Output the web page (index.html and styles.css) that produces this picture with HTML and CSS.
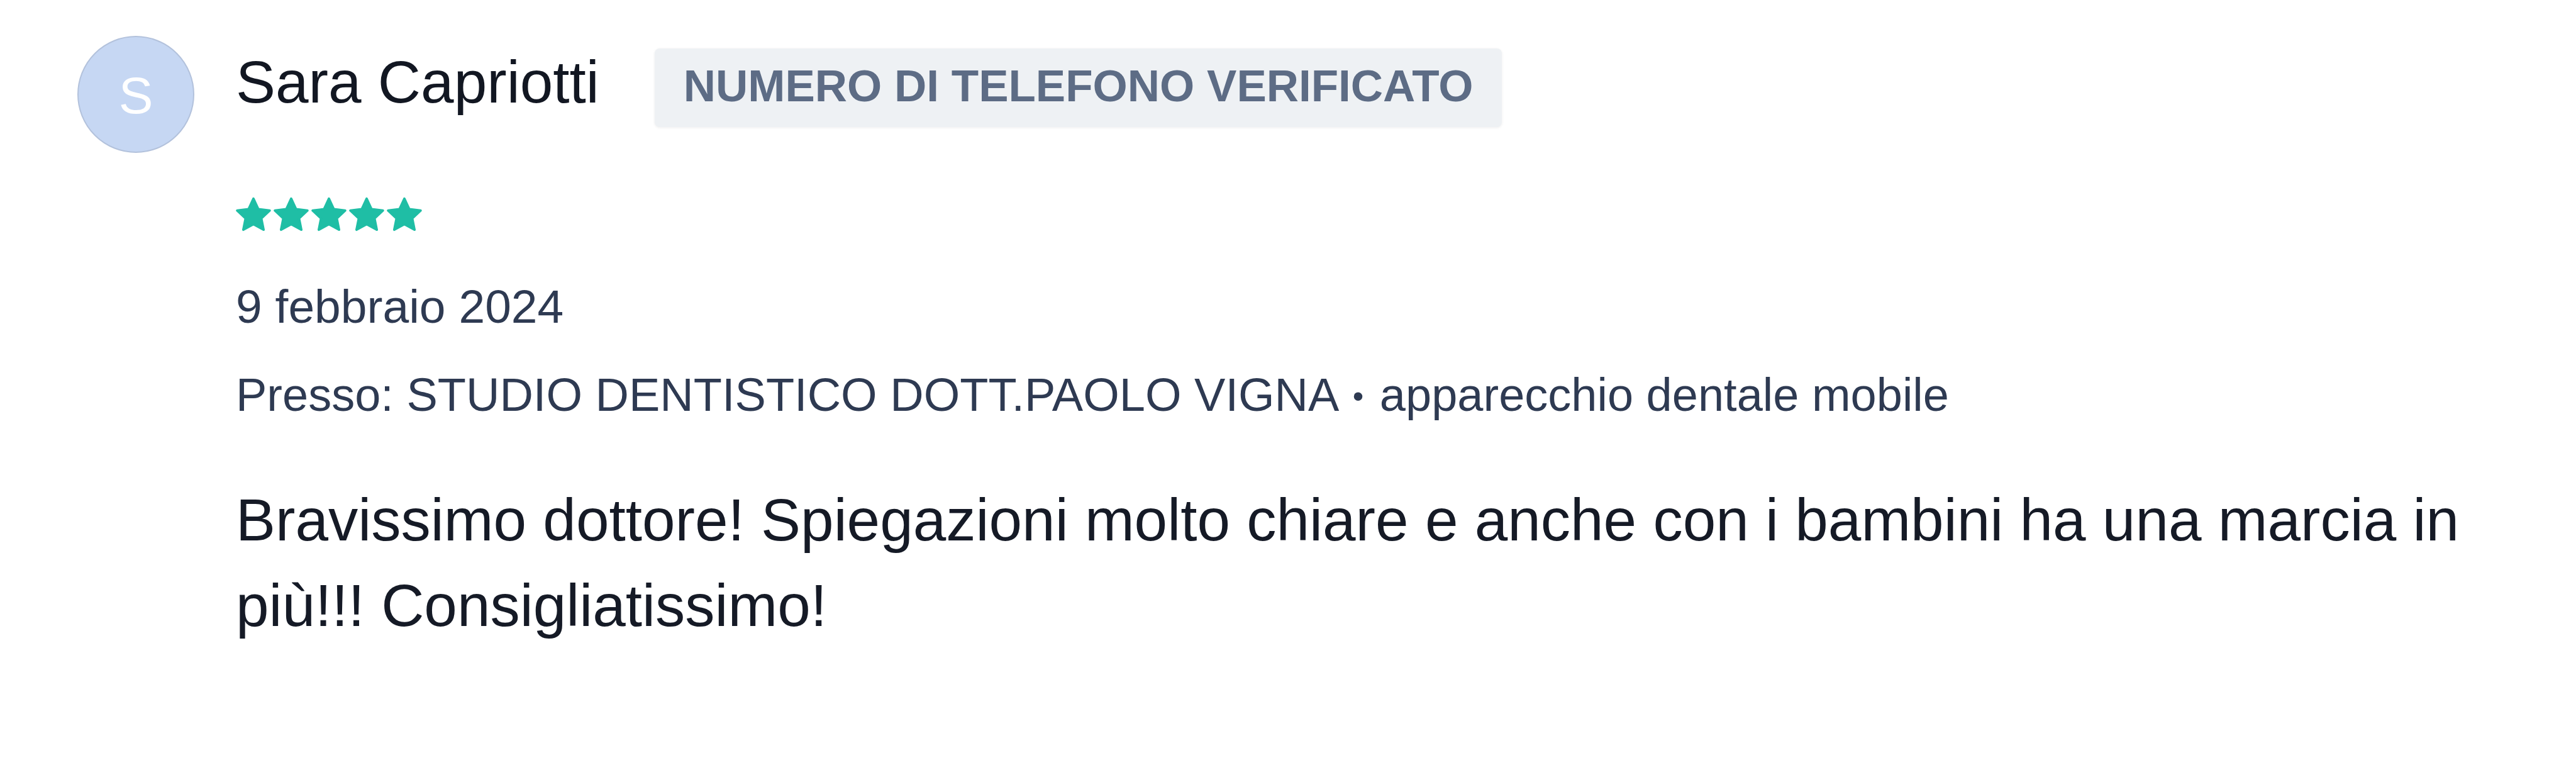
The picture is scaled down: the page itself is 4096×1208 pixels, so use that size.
FILE: index.html
```html
<!DOCTYPE html>
<html lang="it">
<head>
<meta charset="utf-8">
<title>Recensione</title>
<link rel="stylesheet" href="styles.css">
</head>
<body>
<article class="review">
  <div class="avatar"><span>S</span></div>
  <div class="content">
    <header class="head">
      <span class="name">Sara Capriotti</span>
      <span class="badge">NUMERO DI TELEFONO VERIFICATO</span>
    </header>
    <div class="stars">
      <svg viewBox="1.9 1.8 20.2 19.4" class="star"><path d="M12 2.6l2.8 6 6.5.8-4.8 4.5 1.3 6.5L12 17.2l-5.8 3.2 1.3-6.5-4.8-4.5 6.5-.8z"/></svg>
      <svg viewBox="1.9 1.8 20.2 19.4" class="star"><path d="M12 2.6l2.8 6 6.5.8-4.8 4.5 1.3 6.5L12 17.2l-5.8 3.2 1.3-6.5-4.8-4.5 6.5-.8z"/></svg>
      <svg viewBox="1.9 1.8 20.2 19.4" class="star"><path d="M12 2.6l2.8 6 6.5.8-4.8 4.5 1.3 6.5L12 17.2l-5.8 3.2 1.3-6.5-4.8-4.5 6.5-.8z"/></svg>
      <svg viewBox="1.9 1.8 20.2 19.4" class="star"><path d="M12 2.6l2.8 6 6.5.8-4.8 4.5 1.3 6.5L12 17.2l-5.8 3.2 1.3-6.5-4.8-4.5 6.5-.8z"/></svg>
      <svg viewBox="1.9 1.8 20.2 19.4" class="star"><path d="M12 2.6l2.8 6 6.5.8-4.8 4.5 1.3 6.5L12 17.2l-5.8 3.2 1.3-6.5-4.8-4.5 6.5-.8z"/></svg>
    </div>
    <div class="date">9 febbraio 2024</div>
    <div class="where">Presso: STUDIO DENTISTICO DOTT.PAOLO VIGNA <span class="dot">•</span> apparecchio dentale mobile</div>
    <p class="text">Bravissimo dottore! Spiegazioni molto chiare e anche con i bambini ha una marcia in più!!! Consigliatissimo!</p>
  </div>
</article>
</body>
</html>
```

FILE: styles.css
```css
html, body {
  margin: 0;
  padding: 0;
  background: #ffffff;
}

body {
  font-family: "Liberation Sans", Arial, sans-serif;
}

.review {
  display: flex;
  align-items: flex-start;
  gap: 66px;
  padding: 57px 90px 0 123px;
}

.avatar {
  flex: none;
  width: 186px;
  height: 186px;
  box-sizing: border-box;
  border-radius: 50%;
  background: #c6d7f3;
  border: 2px solid #b3c2dc;
  display: flex;
  align-items: center;
  justify-content: center;
}

.avatar span {
  color: #ffffff;
  font-size: 82px;
  line-height: 1;
  margin-top: 4px;
}

.content {
  flex: 1;
  display: flex;
  flex-direction: column;
  align-items: flex-start;
}

.head {
  display: flex;
  align-items: flex-start;
  gap: 88px;
  margin-top: 20px;
}

.name {
  font-size: 94.5px;
  line-height: 94px;
  color: #121722;
  margin-top: 6px;
}

.badge {
  background: #eef1f4;
  color: #5d6c85;
  font-weight: 700;
  font-size: 71px;
  line-height: 80px;
  padding: 20px 46px 25px;
  border-radius: 8px;
  box-shadow: 0 1px 4px rgba(0, 0, 0, 0.07);
  white-space: nowrap;
}

.stars {
  display: flex;
  gap: 4px;
  margin-top: 111px;
}

.star {
  width: 56px;
  height: 55px;
  display: block;
}

.star path {
  fill: #1fbea5;
  stroke: #1fbea5;
  stroke-width: 1.4;
  stroke-linejoin: round;
}

.date {
  font-size: 75px;
  line-height: 74px;
  color: #2e3a52;
  margin-top: 82px;
}

.where {
  font-size: 74px;
  line-height: 74px;
  color: #2e3a52;
  margin-top: 67px;
  white-space: nowrap;
}

.dot {
  font-size: 50px;
  vertical-align: 6px;
  margin: 0 5px;
}

.text {
  margin: 91px 0 0;
  font-size: 94.5px;
  line-height: 136px;
  color: #151a26;
}
```
